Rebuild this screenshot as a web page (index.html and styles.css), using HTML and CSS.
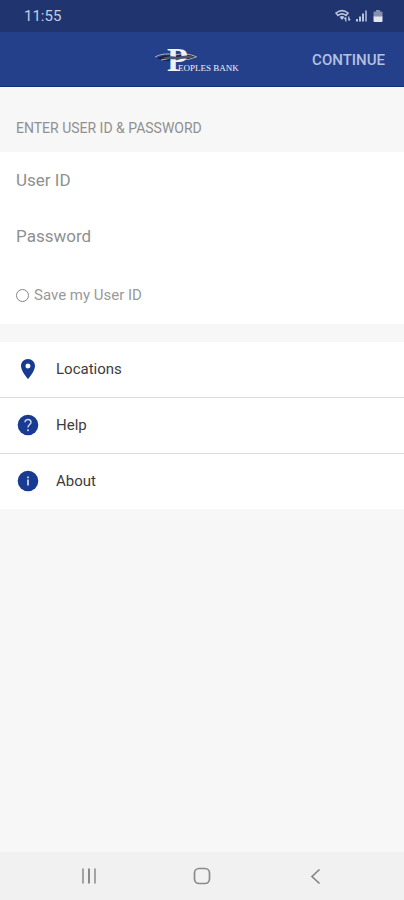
FILE: index.html
```html
<!DOCTYPE html>
<html lang="en">
<head>
<meta charset="utf-8">
<meta name="viewport" content="width=device-width, initial-scale=1">
<title>Peoples Bank</title>
<link rel="stylesheet" href="styles.css">
</head>
<body>
<div class="status-bar">
  <span class="clock">11:55</span>
  <div class="status-icons">
    <svg width="16" height="14" viewBox="0 0 16 14" fill="none" stroke="#b9c3de" stroke-width="1.6" aria-hidden="true">
      <path d="M1 4Q7 -0.8 13 4L11 6.400Q7 3.400 3 6.400Z"/>
      <path d="M4.500 8Q7 6 9.500 8L7 11Z" fill="#b9c3de" stroke="none"/>
      <path d="M10.800 12.500V8.500M9.400 10L10.800 8.500M13.800 7.500V11.500M15.200 10L13.800 11.500" stroke-width="1.3"/>
    </svg>
    <svg width="12" height="14" viewBox="0 0 12 14" aria-hidden="true">
      <path d="M0 10h2v2.500h-2zM3 7.500h2v5h-2z" fill="#b9c3de"/>
      <path d="M6 4.500h2v8h-2z" fill="#b9c3de"/>
      <path d="M9 1.500h2v11h-2z" fill="#8e9cc6"/>
    </svg>
    <svg width="10" height="14" viewBox="0 0 10 14" aria-hidden="true">
      <path d="M3 1h4v1.500h1.500q1 0 1 1V8h-9V3.500q0-1 1-1H3z" fill="#8791ad"/>
      <path d="M.5 7.500h9v4.500q0 1-1 1h-7q-1 0-1-1z" fill="#e2e6f0"/>
    </svg>
  </div>
</div>
<header class="header">
  <svg class="logo" width="94" height="46" viewBox="0 0 94 46" role="img" aria-label="Peoples Bank">
    <path d="M2 21Q10 17 20 19Q32 16 42 20Q34 24 24 22Q12 26 4 22Z" fill="#17203d"/>
    <path d="M0 20Q9 15 20 18Q31 15 42 20M6 23Q16 20 25 22Q34 24 41 20" fill="none" stroke="#a9b0c0" stroke-width="1"/>
    <text class="logo-initial" x="12" y="34">P</text>
    <path d="M7 21Q16 18 22 20Q32 17 40 20Q32 22 24 22Q14 23 7 21Z" fill="#4b5470"/>
    <text class="logo-name" x="23" y="34">EOPLES BANK</text>
  </svg>
  <button class="continue" type="submit" form="login">CONTINUE</button>
</header>
<main>
  <h1 class="section-title">ENTER USER ID &amp; PASSWORD</h1>
  <form id="login" class="login">
    <input class="field" type="text" placeholder="User ID" aria-label="User ID">
    <input class="field" type="password" placeholder="Password" aria-label="Password">
    <div class="save-row">
      <input class="save-check" type="checkbox" id="save">
      <label for="save">Save my User ID</label>
    </div>
  </form>
  <nav class="links">
    <a class="link" href="#locations">
      <svg width="24" height="24" viewBox="0 0 24 24" aria-hidden="true">
        <path d="M12 2C8.100 2 5 5.100 5 9c0 5.200 7 13 7 13s7-7.800 7-13c0-3.900-3.100-7-7-7zm0 9.500a2.500 2.500 0 1 1 0-5 2.500 2.500 0 0 1 0 5z" fill="#183b91"/>
      </svg>
      <span>Locations</span>
    </a>
    <a class="link" href="#help">
      <svg width="24" height="24" viewBox="0 0 24 24" aria-hidden="true">
        <circle cx="12" cy="12" r="10.300" fill="#183b91"/>
        <path d="M9 9.300C9 5.500 15 5.700 15 9.200C15 11.500 12 11.500 12 14.500" fill="none" stroke="#c9d3ec" stroke-width="1.500"/>
        <circle cx="12" cy="17.200" r="1" fill="#c9d3ec"/>
      </svg>
      <span>Help</span>
    </a>
    <a class="link" href="#about">
      <svg width="24" height="24" viewBox="0 0 24 24" aria-hidden="true">
        <circle cx="12" cy="12" r="10.300" fill="#183b91"/>
        <path d="M11.100 10.500h1.800v6h-1.800zM11.100 7.500h1.800v1.800h-1.800z" fill="#c9d3ec"/>
      </svg>
      <span>About</span>
    </a>
  </nav>
</main>
<footer class="system-nav">
  <button type="button" aria-label="Recent apps">
    <svg width="18" height="18" viewBox="0 0 18 18" fill="none" stroke-width="2" aria-hidden="true">
      <path d="M3 1.500v15M15 1.500v15" stroke="#a3a3a3"/><path d="M9 1.500v15" stroke="#8a8a8a"/>
    </svg>
  </button>
  <button type="button" aria-label="Home">
    <svg width="18" height="18" viewBox="0 0 18 18" fill="none" stroke="#8a8a8a" stroke-width="1.700" aria-hidden="true">
      <rect x="1.500" y="1.500" width="15" height="15" rx="4.500"/>
    </svg>
  </button>
  <button type="button" aria-label="Back">
    <svg width="18" height="18" viewBox="0 0 18 18" fill="none" stroke="#858585" stroke-width="1.700" aria-hidden="true">
      <path d="M13.500 2.500L6 9.500l7.500 7"/>
    </svg>
  </button>
</footer>
</body>
</html>
```
FILE: styles.css
```css
* {
  box-sizing: border-box;
}

body {
  margin: 0;
  min-height: 100vh;
  display: flex;
  flex-direction: column;
  background: #f7f7f7;
  color: #3c3c3c;
  font-family: Roboto, "Liberation Sans", sans-serif;
}

button {
  padding: 0;
  border: 0;
  background: none;
  font-family: inherit;
}

.status-bar {
  display: flex;
  align-items: center;
  justify-content: space-between;
  height: 32px;
  padding: 0 21px 0 24px;
  background: #20356f;
}

.clock {
  color: #c3cde6;
  font-size: 15px;
}

.status-icons {
  display: flex;
  align-items: center;
  gap: 5px;
}

.header {
  display: grid;
  grid-template-columns: 1fr auto 1fr;
  align-items: center;
  height: 55px;
  padding: 1px 19px 0;
  border-bottom: 1px solid #152e75;
  background: #25408b;
}

.logo {
  grid-column: 2;
}

.logo-initial,
.logo-name {
  fill: #f0f2f7;
  font-family: "Liberation Serif", serif;
}

.logo-initial {
  font-size: 34px;
  font-weight: 700;
}

.logo-name {
  font-size: 9px;
}

.continue {
  justify-self: end;
  color: #b4c0e2;
  font-size: 15px;
  font-weight: 500;
}

main {
  flex: 1;
}

.section-title {
  margin: 0;
  padding: 32px 16px 15px;
  color: #909090;
  font-size: 14px;
  font-weight: 400;
  line-height: 18px;
}

.login,
.link {
  background: #fff;
}

.field {
  display: block;
  width: 100%;
  height: 56px;
  padding: 0 16px;
  border: 0;
  border-radius: 0;
  background: #fff;
  color: #3c3c3c;
  font-family: inherit;
  font-size: 17px;
}

.field::placeholder {
  color: #8f8f8f;
  opacity: 1;
}

.save-row {
  display: flex;
  align-items: center;
  gap: 5px;
  height: 60px;
  padding: 2px 16px 0;
  color: #999;
  font-size: 15px;
}

.save-check {
  appearance: none;
  width: 13px;
  height: 13px;
  margin: 0;
  border: 1px solid #858585;
  border-radius: 50%;
}

.save-check:checked {
  background: #183b91;
}

.links {
  margin-top: 18px;
}

.link {
  display: flex;
  align-items: center;
  gap: 16px;
  height: 56px;
  padding: 0 16px 2px;
  border-bottom: 1px solid #dcdcdc;
  color: #3c3c3c;
  font-size: 15px;
  text-decoration: none;
}

.link:last-child {
  height: 55px;
  border-bottom: 0;
}

.system-nav {
  display: grid;
  grid-template-columns: repeat(3, 1fr);
  height: 48px;
  padding: 0 33px;
  background: #f1f1f1;
}

.system-nav button {
  display: flex;
  align-items: center;
  justify-content: center;
}
```
